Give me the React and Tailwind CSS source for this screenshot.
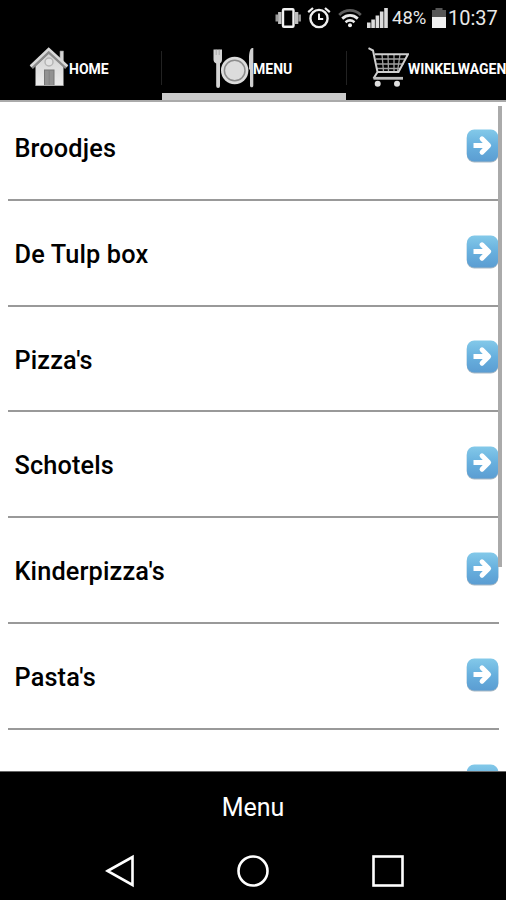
import React from 'react';

const categories = ['Broodjes', 'De Tulp box', "Pizza's", 'Schotels', "Kinderpizza's", "Pasta's", ''];

const VibrateIcon = () => (
    <svg width="26" height="20" viewBox="0 0 26 20" fill="none">
        <rect x="8" y="1.3" width="10.5" height="17.4" rx="1" stroke="#f2f2f2" strokeWidth="2.4" />
        <path d="M4.8 4v12M21.6 4v12" stroke="#bdbdbd" strokeWidth="3.4" />
        <path d="M1.8 6.5v7M24.6 6.5v7" stroke="#9a9a9a" strokeWidth="2.6" />
    </svg>
);

const AlarmIcon = () => (
    <svg width="24" height="22" viewBox="0 0 24 22" fill="none" stroke="#f0f0f0">
        <circle cx="12" cy="11.5" r="8.6" strokeWidth="2.4" />
        <path d="M12 6.5v5.5h4.2" strokeWidth="2" />
        <path d="M1.2 5.2 6 1M22.8 5.2 18 1" strokeWidth="2.2" />
    </svg>
);

const WifiIcon = () => (
    <svg width="24" height="19" viewBox="0 0 24 19" fill="none">
        <path d="M1.2 6C7.5-.1 16.5-.1 22.8 6" stroke="#5c5c5c" strokeWidth="2.8" />
        <path d="M4.2 9.6c4.8-4.2 10.8-4.2 15.6 0" stroke="#e8e8e8" strokeWidth="2.8" />
        <path d="M7.5 13.2c2.9-2.3 6.1-2.3 9 0" stroke="#e8e8e8" strokeWidth="2.6" />
        <circle cx="12" cy="16.3" r="2" fill="#f0f0f0" />
    </svg>
);

const SignalIcon = () => (
    <svg width="21" height="20" viewBox="0 0 21 20" fill="#dcdcdc">
        <rect x="0" y="14.5" width="3.6" height="5.5" />
        <rect x="4.3" y="11.5" width="3.6" height="8.5" />
        <rect x="8.6" y="7.5" width="3.6" height="12.5" />
        <rect x="12.9" y="3.5" width="3.6" height="16.5" />
        <rect x="17.2" y="0" width="3.6" height="20" />
    </svg>
);

const BatteryIcon = () => (
    <svg width="14" height="20" viewBox="0 0 14 20">
        <path d="M0 2h3.5V0h7v2H14v7H0z" fill="#565656" />
        <path d="M0 9h14v11H0z" fill="#f0f0f0" />
    </svg>
);

const HouseIcon = () => (
    <svg width="40" height="42" viewBox="0 0 40 42">
        <defs>
            <linearGradient id="wall" x1="0" y1="0" x2="0" y2="1">
                <stop offset="0" stopColor="#d2d2d2" />
                <stop offset="1" stopColor="#ececec" />
            </linearGradient>
        </defs>
        <path d="M31 4h3.5v13L31 13.5z" fill="#d5d5d5" stroke="#888" strokeWidth=".6" />
        <path d="M6.500 19 20 6l14.500 13v19.500h-28z" fill="url(#wall)" />
        <path d="M2.500 20.500 19.700 4.200 37.500 20.500" fill="none" stroke="#8a8a8a" strokeWidth="4" />
        <path d="M1.600 19.300 19.700 2 38.400 19.300" fill="none" stroke="#d8d8d8" strokeWidth="2.600" />
        <circle cx="20" cy="15" r="4" fill="#e2e2e2" stroke="#b5b5b5" strokeWidth="1.5" />
        <rect x="15.5" y="23" width="9.5" height="15.5" fill="#929292" stroke="#777" />
        <path d="M20.200 24v14" stroke="#7c7c7c" strokeWidth=".7" />
        <path d="M6.500 38.500h28" stroke="#aaa" />
    </svg>
);

const PlateIcon = () => (
    <svg width="41" height="42" viewBox="0 0 41 42">
        <path d="M.5 2.5h8.500v10c0 2-.8 3-2 4V39a1.900 1.900 0 0 1-3.800 0V16.500C1.500 15.500.5 14.500.5 12.500z" fill="#d5d5d5" />
        <path d="M3.200 2.500v5.500M6.200 2.500v5.500" stroke="#999" strokeWidth=".7" />
        <circle cx="21.700" cy="23.500" r="13.700" fill="#dcdcdc" />
        <circle cx="21.700" cy="23.500" r="10.300" fill="#dcdcdc" stroke="#8c8c8c" strokeWidth="1.500" />
        <path d="M39.500 1c-2.500 0-3.500 5-3.500 10.500v11h1V38.500c0 1 .6 1.800 1.700 1.800s1.600-.8 1.600-1.800V1z" fill="#d0d0d0" />
    </svg>
);

const CartIcon = () => (
    <svg width="41" height="42" viewBox="0 0 41 42" fill="none">
        <path d="M8 12h29M8.500 17h27M9 21.500h24M14 7.500l1.500 17M20 7.500l.5 17M26 7.500v17M32 7.500l-2.500 17" stroke="#a0a0a0" strokeWidth="1.300" />
        <path d="M.5 1.200 5 3.500l4.500 21.500L5.500 31.500M7 7.200h33L30.500 25H9.500" stroke="#d0d0d0" strokeWidth="2" />
        <path d="M5.500 31.300H35" stroke="#bcbcbc" strokeWidth="2.800" />
        <circle cx="9.700" cy="36.700" r="3" fill="#e0e0e0" />
        <circle cx="29" cy="36.700" r="3" fill="#e0e0e0" />
    </svg>
);

const ArrowIcon = () => (
    <svg width="33" height="34" viewBox="0 0 33 34" className="shrink-0">
        <defs>
            <linearGradient id="arrowBg" x1="0" y1="0" x2="0" y2="1">
                <stop offset="0" stopColor="#83c9e9" />
                <stop offset=".5" stopColor="#68b0de" />
                <stop offset="1" stopColor="#5b9dd2" />
            </linearGradient>
        </defs>
        <rect x=".8" y="1.5" width="31.5" height="32" rx="7.5" fill="#a9b9c5" />
        <rect x=".8" y=".5" width="31.5" height="32" rx="7.5" fill="url(#arrowBg)" />
        <path d="M7.500 16.500H20" fill="none" stroke="#fff" strokeWidth="5" />
        <path d="M16 9.800l6.700 6.700L16 23.200" fill="none" stroke="#fff" strokeWidth="4.800" strokeLinecap="round" strokeLinejoin="round" />
    </svg>
);

const StatusBar = () => (
    <div className="flex h-[36px] shrink-0 items-center pl-[275px] text-[#e8e8e8]">
        <VibrateIcon />
        <span className="ml-1.5"><AlarmIcon /></span>
        <span className="ml-[7px]"><WifiIcon /></span>
        <span className="ml-[5px]"><SignalIcon /></span>
        <span className="ml-[4px] w-[40px] pt-0.5 whitespace-nowrap text-[18.5px]">48%</span>
        <BatteryIcon />
        <span className="ml-[2px] whitespace-nowrap text-[20px]">10:37</span>
    </div>
);

const Tabs = () => (
    <nav className="flex h-[66px] shrink-0 overflow-hidden border-b-2 border-[#aaa] text-[14px] font-bold text-white">
        <div className="flex w-[162px] shrink-0 pl-[29px]">
            <span className="mt-[11px]"><HouseIcon /></span>
            <span className="mt-[23px]">HOME</span>
            <span className="mt-[15px] ml-auto h-[34px] w-px bg-[#222]" />
        </div>
        <div className="flex w-[184px] shrink-0 flex-col">
            <div className="flex h-[57px] pl-[51px]">
                <span className="mt-[11px]"><PlateIcon /></span>
                <span className="mt-[23px] -ml-px">MENU</span>
            </div>
            <div className="h-[7px] bg-[#cbcbcb]" />
        </div>
        <div className="flex w-[184px] shrink-0">
            <span className="mt-[15px] mr-[21px] h-[34px] w-px bg-[#222]" />
            <span className="mt-[11px]"><CartIcon /></span>
            <span className="mt-[23px] -ml-px">WINKELWAGEN</span>
        </div>
    </nav>
);

const App = () => {
    return (
        <div className="flex h-[900px] w-[506px] flex-col overflow-hidden bg-black font-[Roboto,sans-serif]">
            <StatusBar />
            <Tabs />
            <main className="relative min-h-0 flex-1 overflow-hidden border-b border-[#666] bg-white">
                <ul className="-mt-[7px] pr-[7px] pl-2">
                    {categories.map((name, index) => (
                        <li
                            key={index}
                            className="flex h-[105.8px] items-center justify-between border-b-2 border-[#999] pl-[6.5px] text-[25.3px] font-medium tracking-[0.14px] text-black"
                        >
                            <span className="pt-1">{name}</span>
                            <span className="-mt-0.5"><ArrowIcon /></span>
                        </li>
                    ))}
                </ul>
                <div className="absolute top-[4px] right-[4px] h-[461px] w-[4px] bg-[#aaa]" />
            </main>
            <footer className="h-[128px] shrink-0 text-white">
                <div className="flex h-[69px] items-center justify-center pt-[3px] text-[25px]">Menu</div>
                <div className="flex h-[59px] items-center justify-between pr-[101px] pl-[105px]">
                    <svg width="30" height="34" viewBox="0 0 30 34" fill="none">
                        <path d="M2.5 17 27.5 3v28z" stroke="#fff" strokeWidth="2.6" />
                    </svg>
                    <svg width="34" height="34" viewBox="0 0 34 34" fill="none">
                        <circle cx="17" cy="17" r="14.5" stroke="#fff" strokeWidth="2.6" />
                    </svg>
                    <svg width="34" height="34" viewBox="0 0 34 34" fill="none">
                        <rect x="2.5" y="2.5" width="29" height="29" stroke="#fff" strokeWidth="2.6" />
                    </svg>
                </div>
            </footer>
        </div>
    );
};

export default App;
